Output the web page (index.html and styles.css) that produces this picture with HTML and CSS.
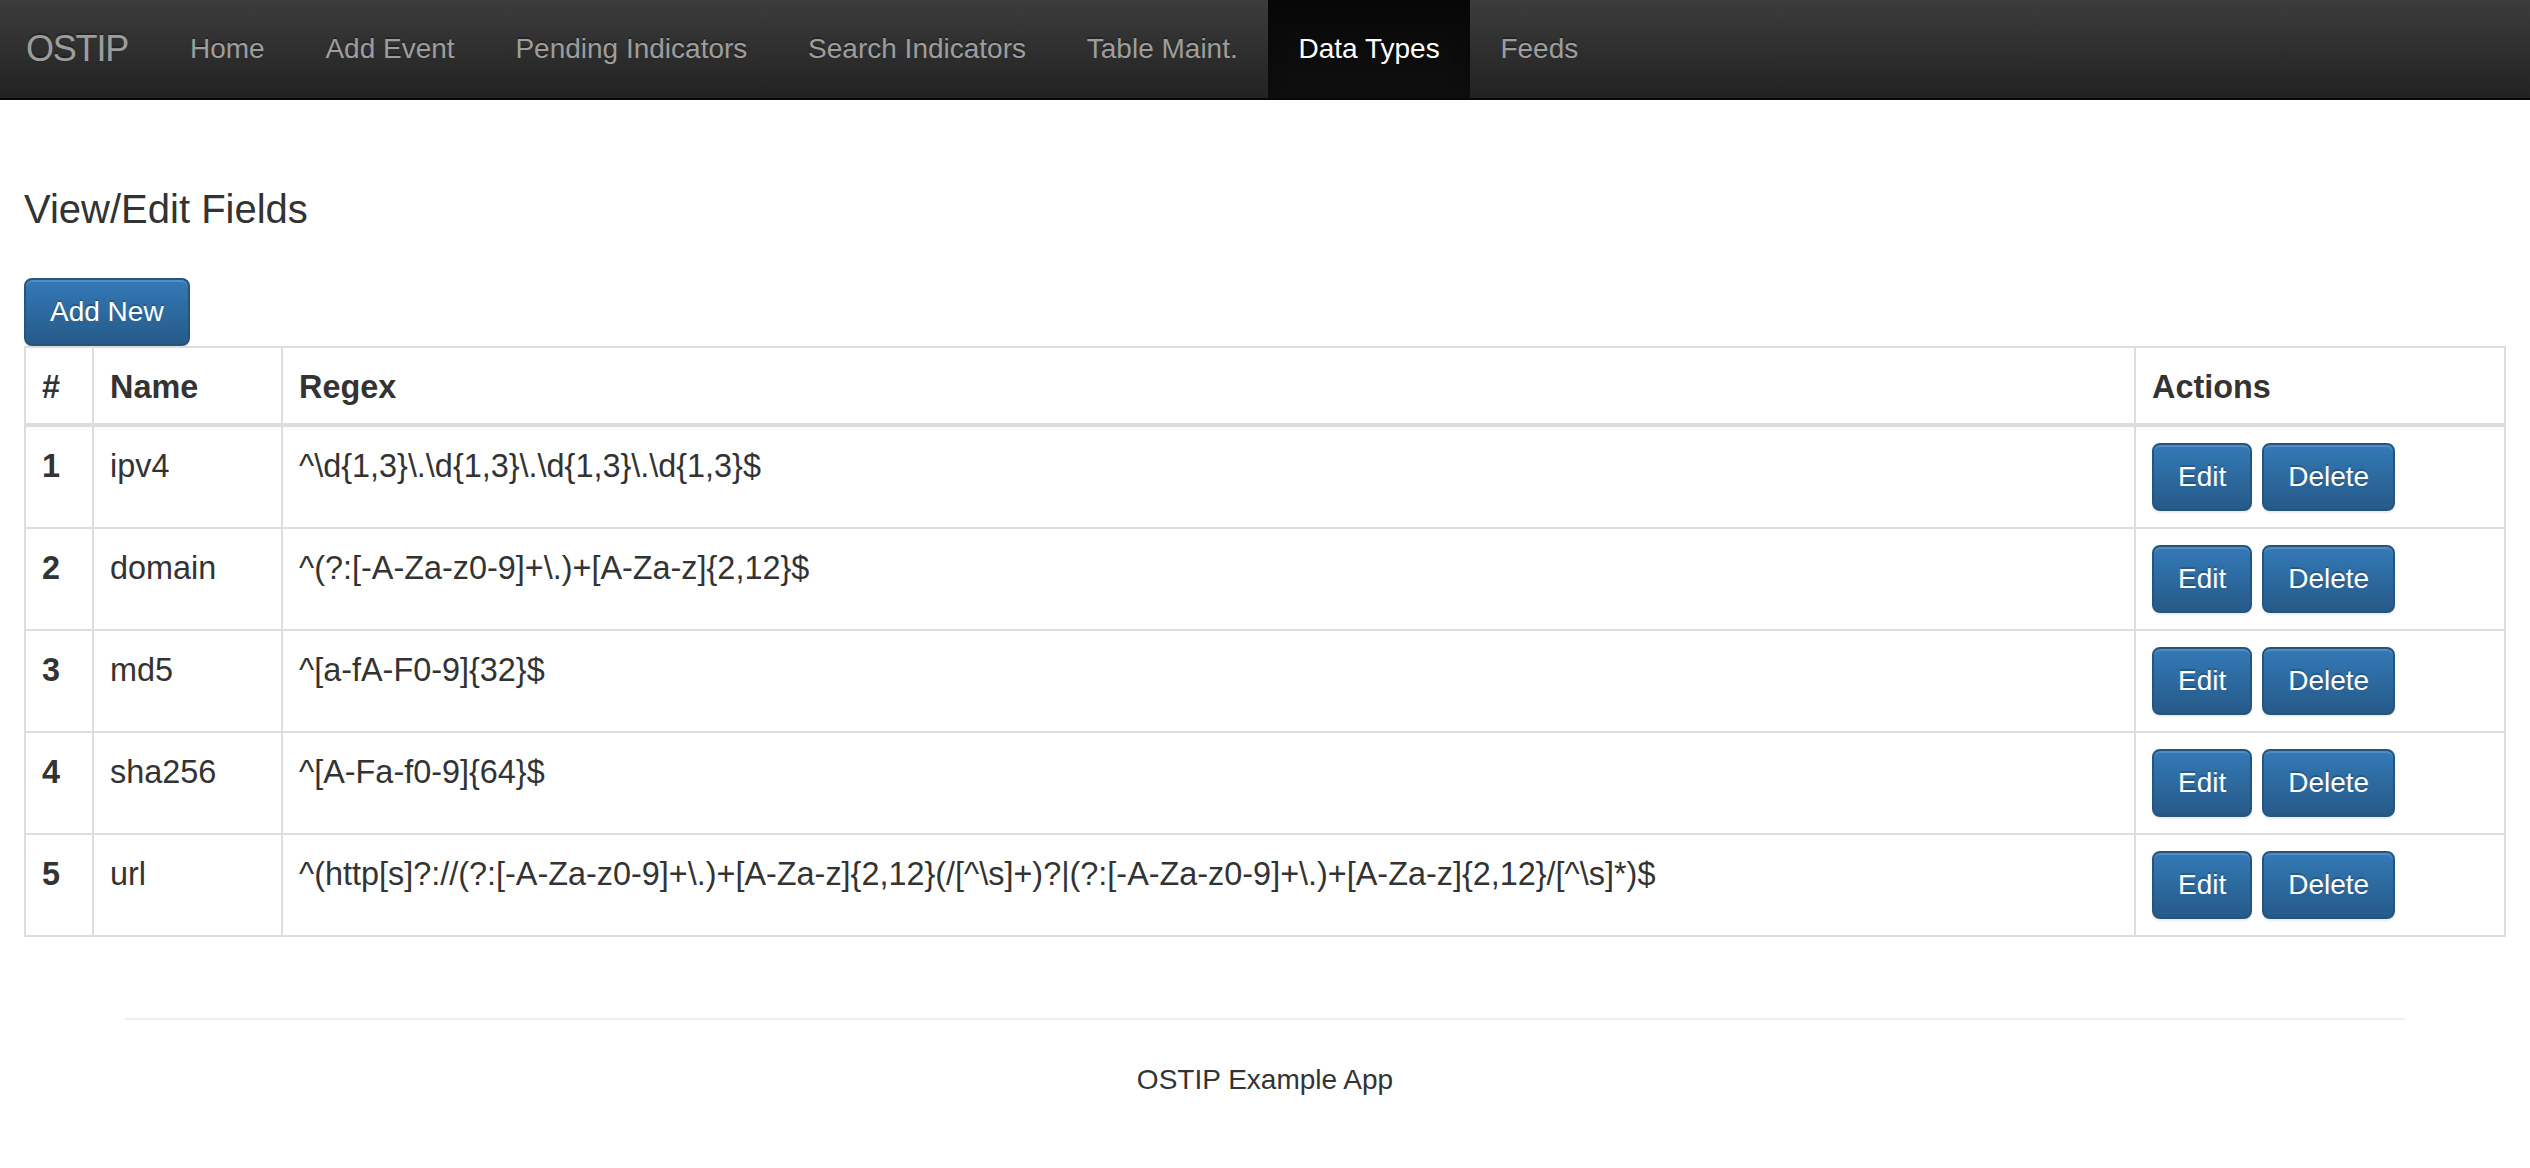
FILE: index.html
```html
<!DOCTYPE html>
<html>
<head>
<meta charset="utf-8">
<title>OSTIP - Data Types</title>
<link rel="stylesheet" href="styles.css">
</head>
<body>
<nav class="navbar">
  <a class="brand" href="#">OSTIP</a>
  <ul class="nav">
    <li><a href="#">Home</a></li>
    <li><a href="#">Add Event</a></li>
    <li><a href="#">Pending Indicators</a></li>
    <li><a href="#">Search Indicators</a></li>
    <li><a href="#">Table Maint.</a></li>
    <li class="active"><a href="#">Data Types</a></li>
    <li><a href="#">Feeds</a></li>
  </ul>
</nav>
<main class="main">
  <h3 class="title">View/Edit Fields</h3>
  <button class="btn btn-add">Add New</button>
  <table class="grid">
    <colgroup>
      <col class="c-num">
      <col class="c-name">
      <col>
      <col class="c-act">
    </colgroup>
    <thead>
      <tr><th>#</th><th>Name</th><th>Regex</th><th>Actions</th></tr>
    </thead>
    <tbody>
      <tr><td class="num">1</td><td>ipv4</td><td>^\d{1,3}\.\d{1,3}\.\d{1,3}\.\d{1,3}$</td><td class="acts"><div class="btns"><button class="btn">Edit</button><button class="btn">Delete</button></div></td></tr>
      <tr><td class="num">2</td><td>domain</td><td>^(?:[-A-Za-z0-9]+\.)+[A-Za-z]{2,12}$</td><td class="acts"><div class="btns"><button class="btn">Edit</button><button class="btn">Delete</button></div></td></tr>
      <tr><td class="num">3</td><td>md5</td><td>^[a-fA-F0-9]{32}$</td><td class="acts"><div class="btns"><button class="btn">Edit</button><button class="btn">Delete</button></div></td></tr>
      <tr><td class="num">4</td><td>sha256</td><td>^[A-Fa-f0-9]{64}$</td><td class="acts"><div class="btns"><button class="btn">Edit</button><button class="btn">Delete</button></div></td></tr>
      <tr><td class="num">5</td><td>url</td><td>^(http[s]?://(?:[-A-Za-z0-9]+\.)+[A-Za-z]{2,12}(/[^\s]+)?|(?:[-A-Za-z0-9]+\.)+[A-Za-z]{2,12}/[^\s]*)$</td><td class="acts"><div class="btns"><button class="btn">Edit</button><button class="btn">Delete</button></div></td></tr>
    </tbody>
  </table>
</main>
<footer class="footer">
  <div class="footer-inner">
    <p>OSTIP Example App</p>
  </div>
</footer>
</body>
</html>
```

FILE: styles.css
```css
* { box-sizing: border-box; }
html, body { margin: 0; padding: 0; }
body {
  font-family: "Liberation Sans", Arial, Helvetica, sans-serif;
  font-size: 28px;
  line-height: 40px;
  color: #333;
  background: #fff;
}

.navbar {
  display: flex;
  align-items: stretch;
  height: 100px;
  background-image: linear-gradient(to bottom, #3c3c3c 0, #222 100%);
  border-bottom: 2px solid #080808;
}
.brand {
  display: block;
  padding: 29px 31.5px 0 26px;
  font-size: 36px;
  line-height: 40px;
  letter-spacing: -1.2px;
  color: #9d9d9d;
  text-decoration: none;
  text-shadow: 0 -2px 0 rgba(0,0,0,.25);
}
.nav {
  display: flex;
  list-style: none;
  margin: 0;
  padding: 0;
}
.nav li { display: block; }
.nav a {
  display: block;
  height: 98px;
  padding: 29px 30.4px 0;
  line-height: 40px;
  color: #9d9d9d;
  text-decoration: none;
  text-shadow: 0 -2px 0 rgba(0,0,0,.25);
}
.nav li.active a {
  color: #fff;
  background-image: linear-gradient(to bottom, #080808 0, #0f0f0f 100%);
  box-shadow: inset 0 6px 18px rgba(0,0,0,.25);
}

.main {
  padding: 0 24px;
}
.title {
  margin: 86px 0 46px;
  font-size: 40px;
  line-height: 46px;
  font-weight: normal;
  color: #333;
}

.btn {
  display: inline-block;
  margin: 0;
  padding: 12px 24px;
  font-family: inherit;
  font-size: 28px;
  line-height: 40px;
  color: #fff;
  border: 2px solid #245580;
  border-radius: 8px;
  background-color: #265a88;
  background-image: linear-gradient(to bottom, #337ab7 0, #265a88 100%);
  text-shadow: 0 -2px 0 rgba(0,0,0,.2);
  box-shadow: inset 0 2px 0 rgba(255,255,255,.15), 0 2px 2px rgba(0,0,0,.075);
  cursor: pointer;
}
.btn-add { display: block; }

.grid {
  width: 100%;
  table-layout: fixed;
  border-collapse: collapse;
  border: 2px solid #ddd;
  font-size: 32.4px;
}
.c-num { width: 68px; }
.c-name { width: 189px; }
.c-act { width: 370px; }
.grid th, .grid td {
  border: 2px solid #ddd;
  text-align: left;
  vertical-align: top;
  line-height: 40px;
}
.grid th {
  padding: 19px 16px 16px;
  font-weight: bold;
  vertical-align: bottom;
  border-bottom-width: 4px;
}
.grid td {
  padding: 19px 16px 16px;
  white-space: nowrap;
}
.grid td.num { font-weight: bold; }
.grid td.acts { padding: 16px 16px; }
.btns {
  display: flex;
  gap: 10px;
}

.footer {
  margin-top: 81px;
}
.footer-inner {
  width: 2280px;
  margin: 0 auto;
  border-top: 2px solid #eee;
  text-align: center;
}
.footer-inner p {
  margin: 40px 0 40px;
  line-height: 40px;
}
```
